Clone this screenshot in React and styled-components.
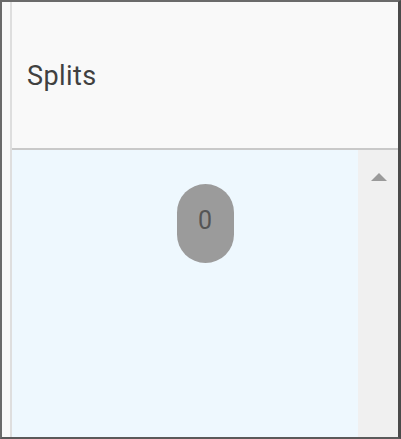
import React from "react";
import styled, { createGlobalStyle } from "styled-components";

const Global = createGlobalStyle`
  html, body { margin: 0; padding: 0; background: #ffffff; }
  body { font-family: Roboto, "Liberation Sans", Arial, sans-serif; }
`;

const Frame = styled.div`
  box-sizing: border-box;
  width: 401px;
  height: 439px;
  border-top: 2px solid #6a6a6a;
  border-left: 2px solid #6a6a6a;
  border-right: 3px solid #4a4a4a;
  border-bottom: 2px solid #5a5a5a;
  display: grid;
  grid-template-columns: 8px 2px 1fr;
  background: #f9f9f9;
`;

const Gutter = styled.div`
  background: #f9f9f9;
`;

const Divider = styled.div`
  background: #dedede;
`;

const Main = styled.div`
  display: flex;
  flex-direction: column;
  min-width: 0;
`;

const Header = styled.div`
  box-sizing: border-box;
  height: 148px;
  display: flex;
  align-items: center;
  padding-left: 15px;
  padding-top: 1px;
  background: #f9f9f9;
  border-bottom: 2px solid #c9c9c9;
`;

const Title = styled.span`
  font-size: 27px;
  letter-spacing: 0.4px;
  color: #404040;
`;

const Body = styled.div`
  flex: 1;
  display: grid;
  grid-template-columns: 1fr 40px;
`;

const Cell = styled.div`
  background: #eef8fe;
  display: flex;
  justify-content: center;
  align-items: flex-start;
  padding-top: 34px;
  padding-left: 40px;
`;

const Pill = styled.div`
  width: 57px;
  height: 79px;
  border-radius: 29px;
  background: #9b9b9b;
  display: flex;
  justify-content: center;
  align-items: center;
  padding-bottom: 6px;
  box-sizing: border-box;
  font-size: 25px;
  color: #555555;
`;

const Scrollbar = styled.div`
  background: #f0f0f0;
  display: flex;
  justify-content: center;
  padding-top: 23px;
  padding-left: 1px;
`;

const Arrow = styled.div`
  width: 0;
  height: 0;
  border-left: 8px solid transparent;
  border-right: 8px solid transparent;
  border-bottom: 8px solid #9a9a9a;
`;

export default function App() {
  return (
    <>
      <Global />
      <Frame>
        <Gutter />
        <Divider />
        <Main>
          <Header>
            <Title>Splits</Title>
          </Header>
          <Body>
            <Cell>
              <Pill>0</Pill>
            </Cell>
            <Scrollbar>
              <Arrow />
            </Scrollbar>
          </Body>
        </Main>
      </Frame>
    </>
  );
}
